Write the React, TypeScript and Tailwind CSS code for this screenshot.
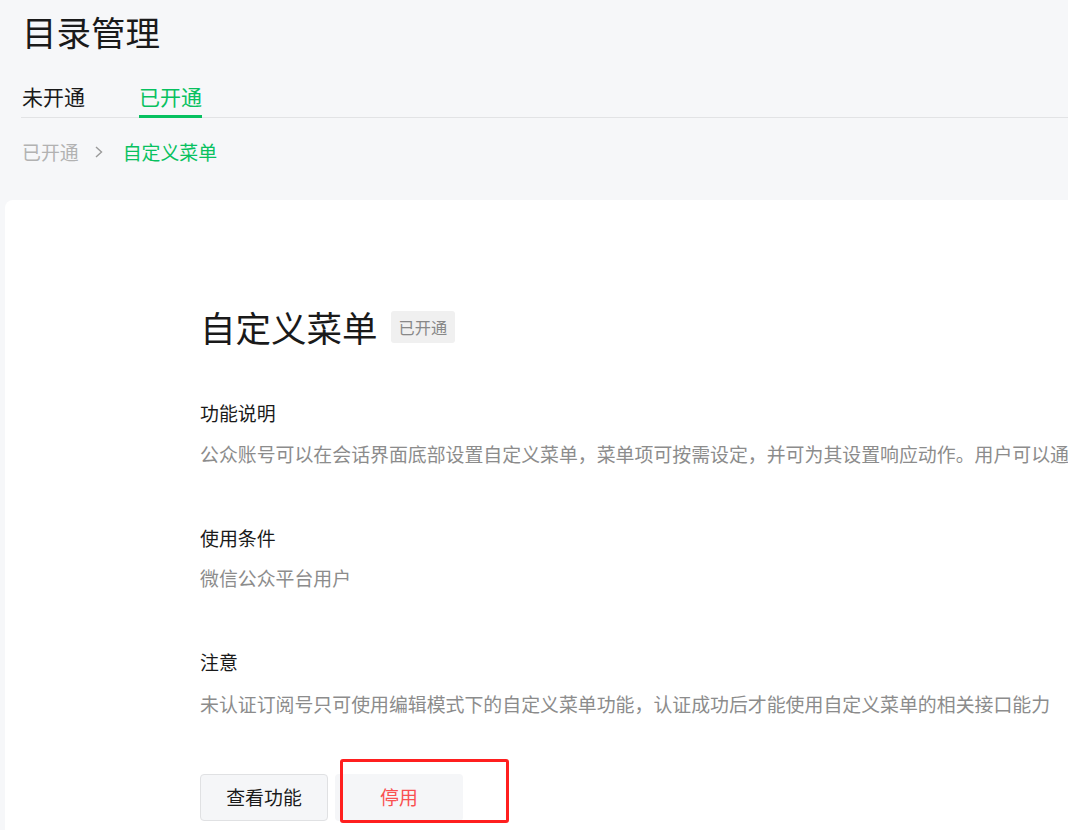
import React from "react";

export default function App() {
  const font = { fontFamily: '"Noto Sans CJK SC", "Noto Sans", sans-serif' };
  return (
    <div
      className="w-[1068px] h-[830px] overflow-hidden bg-[#f6f7f9] text-[#1a1a1a] flex flex-col"
      style={font}
    >
      <div className="pl-[22px]">
        <div className="pt-[8px] text-[34.5px] leading-[46px]">目录管理</div>
        <div className="mt-[28px] flex gap-[54px] border-b border-[#e2e3e5] ml-[-1px]">
          <div className="pb-[5px] text-[21px] leading-[28px] border-b-[3px] border-transparent -mb-px pl-px">
            未开通
          </div>
          <div className="pb-[5px] text-[21px] leading-[28px] border-b-[3px] border-[#07c160] text-[#07c160] -mb-px">
            已开通
          </div>
        </div>
        <div className="mt-[20px] flex items-center text-[18.9px] leading-[28px]">
          <span className="text-[#b2b2b2]">已开通</span>
          <svg className="ml-[14px] mr-[18px]" width="12" height="16" viewBox="0 0 12 16">
            <path d="M3 3 L8.5 8 L3 13" fill="none" stroke="#9a9a9a" strokeWidth="1.4" />
          </svg>
          <span className="text-[#07c160]">自定义菜单</span>
        </div>
      </div>
      <div className="mt-[34px] ml-[5px] flex-1 bg-white rounded-tl-[8px] pl-[195px] pt-[103px] whitespace-nowrap overflow-hidden">
        <div className="flex items-center">
          <span className="text-[35.5px] leading-[48px]">自定义菜单</span>
          <span className="ml-[13px] h-[32px] px-[8px] flex items-center rounded-[3px] bg-[#f0f0f0] text-[#888] text-[16.2px]">
            已开通
          </span>
        </div>
        <div className="mt-[48px] text-[18.9px] leading-[28px]">功能说明</div>
        <div className="mt-[13px] text-[18.9px] leading-[28px] text-[#8c8c8c]">
          公众账号可以在会话界面底部设置自定义菜单，菜单项可按需设定，并可为其设置响应动作。用户可以通过点击菜单项
        </div>
        <div className="mt-[56px] text-[18.9px] leading-[28px]">使用条件</div>
        <div className="mt-[12px] text-[18.9px] leading-[28px] text-[#8c8c8c]">微信公众平台用户</div>
        <div className="mt-[56px] text-[18.9px] leading-[28px]">注意</div>
        <div className="mt-[14px] text-[18.9px] leading-[28px] text-[#8c8c8c]">
          未认证订阅号只可使用编辑模式下的自定义菜单功能，认证成功后才能使用自定义菜单的相关接口能力
        </div>
        <div className="relative mt-[56px] flex gap-[7px]">
          <button className="w-[128px] h-[47px] rounded-[4px] border border-[#e0e1e3] bg-[#f5f6f8] text-[18.9px] text-[#1a1a1a]">
            查看功能
          </button>
          <button className="w-[128px] h-[47px] rounded-[4px] bg-[#f5f6f8] text-[18.9px] text-[#fa5151]">
            停用
          </button>
          <div className="absolute left-[140px] top-[-15px] w-[169px] h-[64px] border-[3px] border-[#ff1f1f] rounded-[3px] pointer-events-none" />
        </div>
      </div>
    </div>
  );
}
